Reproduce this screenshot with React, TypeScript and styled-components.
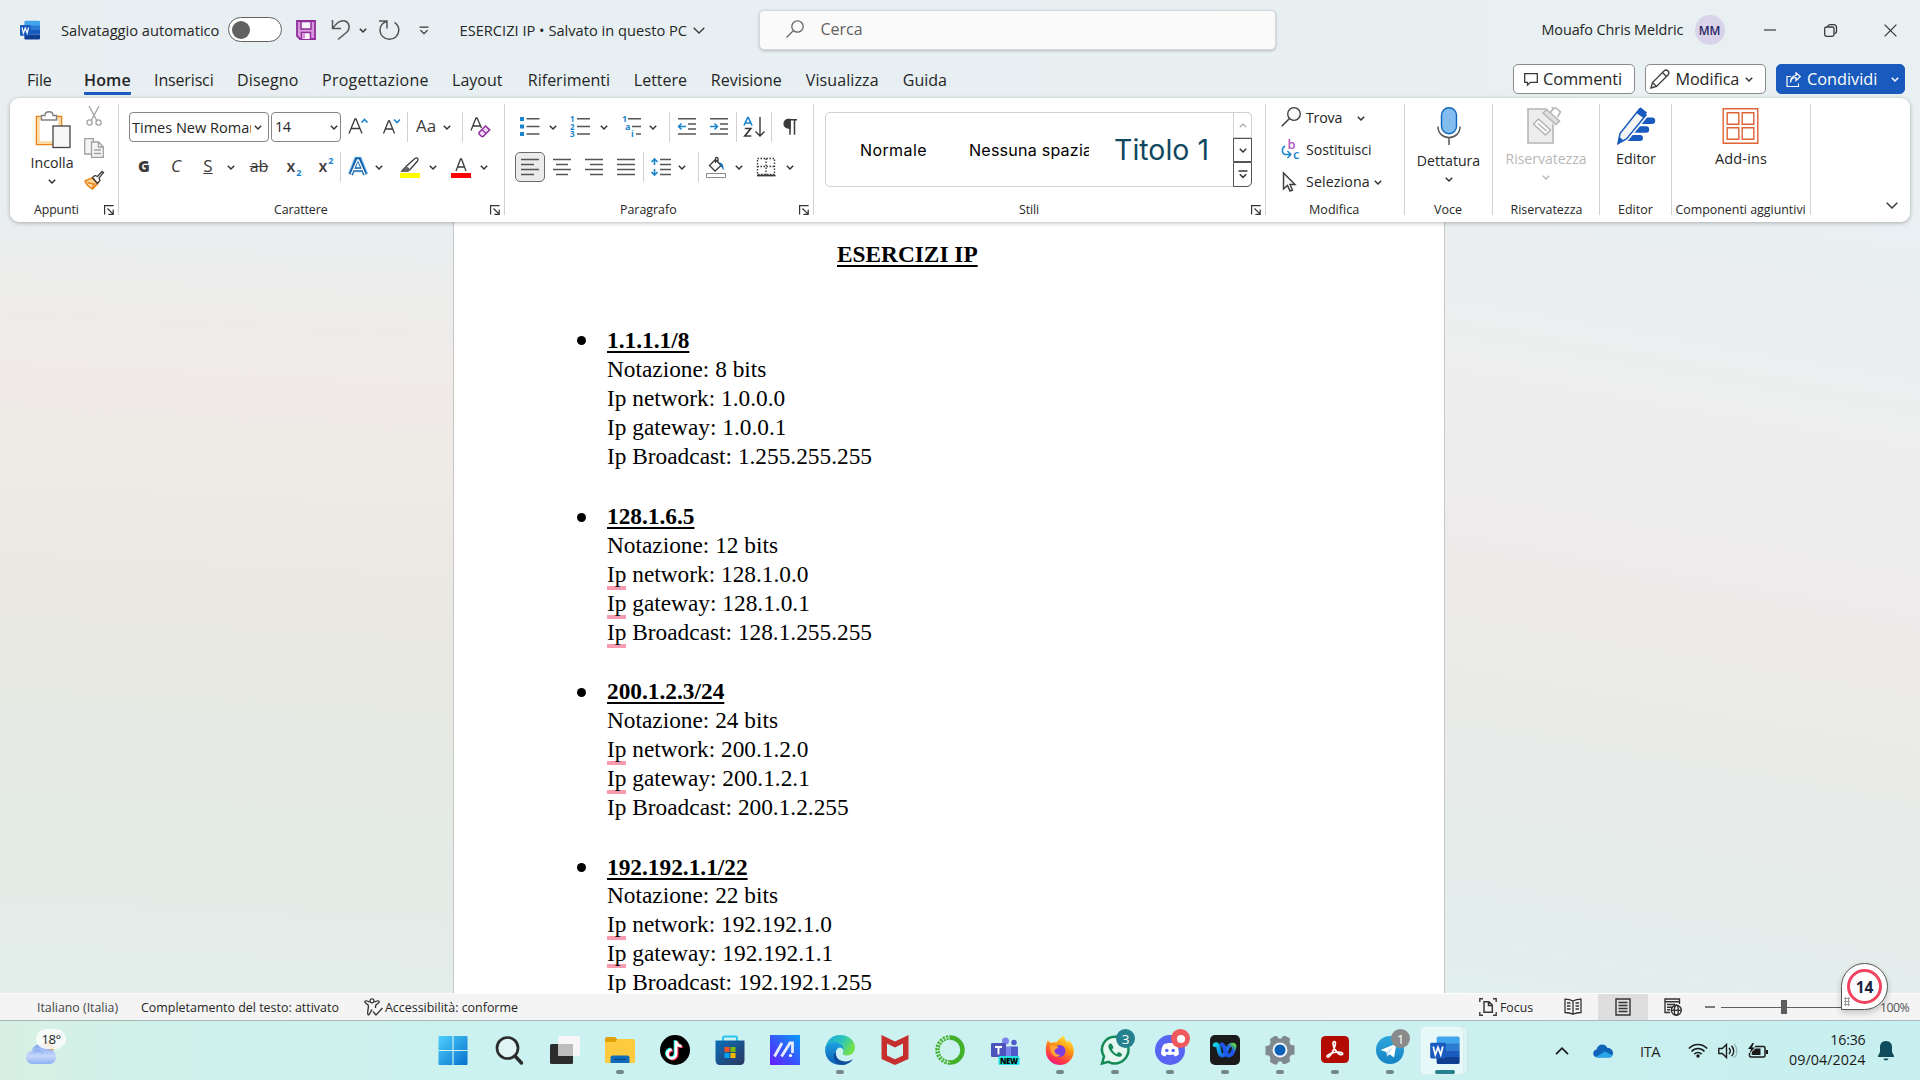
import React from "react";
import styled, { createGlobalStyle } from "styled-components";

const ui = `"Open Sans", "Noto Sans", sans-serif`;

const Global = createGlobalStyle`
  body { margin: 0; overflow: hidden; background: #e8eff2; }
  * { box-sizing: border-box; }
  svg { display: block; flex: none; overflow: visible; }
`;

const Screen = styled.div`
  width: 1920px;
  height: 1080px;
  position: relative;
  overflow: hidden;
  display: flex;
  flex-direction: column;
  background: linear-gradient(90deg, #e9eef1 0, #e7eff2 500px, #e8f0f2 100%);
  font-family: ${ui};
  color: #262626;
`;

const Txt = styled.span<{ $s?: number; $ls?: number; $c?: string; $w?: number; $ml?: number }>`
  font-size: ${(p) => p.$s ?? 14.2}px;
  letter-spacing: ${(p) => p.$ls ?? 0}px;
  color: ${(p) => p.$c ?? "#262626"};
  font-weight: ${(p) => p.$w ?? 400};
  margin-left: ${(p) => p.$ml ?? 0}px;
  line-height: 20px;
  white-space: nowrap;
`;

/* ---------- title bar ---------- */
const TitleBar = styled.header`
  height: 58px;
  flex: none;
  display: flex;
  align-items: center;
  padding-top: 2px;
`;
const Item = styled.div<{ $ml?: number }>`
  margin-left: ${(p) => p.$ml ?? 0}px;
  flex: none;
  display: flex;
  align-items: center;
`;
const Toggle = styled.div`
  width: 54px;
  height: 25px;
  margin-top: -1px;
  border: 1px solid #616161;
  border-radius: 13px;
  background: #fff;
  padding: 3px;
  &::before {
    content: "";
    display: block;
    width: 18px;
    height: 18px;
    border-radius: 50%;
    background: #616161;
  }
`;
const Slot = styled.div<{ $w: number }>`
  width: ${(p) => p.$w}px;
  flex: none;
  display: flex;
  align-items: center;
`;
const Search = styled.div`
  width: 517px;
  height: 40px;
  flex: none;
  display: flex;
  align-items: center;
  padding: 0 0 2px 26px;
  border: 1px solid #d4d8da;
  border-radius: 5px;
  background: #fafafa;
  box-shadow: 0 1px 3px rgba(0, 0, 0, 0.22);
`;
const Avatar = styled.div`
  width: 30px;
  height: 30px;
  border-radius: 50%;
  background: #d8d3e8;
  display: flex;
  align-items: center;
  justify-content: center;
`;

/* ---------- tabs ---------- */
const TabBar = styled.nav`
  height: 40px;
  flex: none;
  display: flex;
  padding: 0 15px 0 27px;
`;
const Tab = styled.div<{ $w: number; $on?: boolean }>`
  width: ${(p) => p.$w}px;
  margin-right: 22.8px;
  height: 37px;
  padding-top: 11px;
  white-space: nowrap;
  border-bottom: 3px solid ${(p) => (p.$on ? "#185abd" : "transparent")};
  border-radius: 1px;
`;
const TabActions = styled.div`
  margin-left: auto;
  padding-top: 6px;
  display: flex;
  gap: 10px;
`;
const ActionButton = styled.div<{ $w: number; $primary?: boolean; $pl: number }>`
  width: ${(p) => p.$w}px;
  height: 30px;
  display: flex;
  align-items: center;
  padding-left: ${(p) => p.$pl}px;
  border-radius: 5px;
  border: 1px solid ${(p) => (p.$primary ? "#185abd" : "#8a8a8a")};
  background: ${(p) => (p.$primary ? "#185abd" : "#fff")};
`;

/* ---------- ribbon ---------- */
const Ribbon = styled.section`
  height: 124px;
  flex: none;
  margin: 0 10px;
  border-radius: 9px;
  background: #fff;
  box-shadow: 0 1px 4px rgba(0, 0, 0, 0.28);
  display: flex;
  position: relative;
  z-index: 2;
`;
const Group = styled.div<{ $w: number }>`
  width: ${(p) => p.$w}px;
  height: 111px;
  margin-top: 6px;
  flex: none;
  border-right: 1px solid #d1d1d1;
  display: flex;
  flex-direction: column;
`;
const GroupBody = styled.div<{ $pt?: number }>`
  height: 95px;
  padding-top: ${(p) => p.$pt ?? 0}px;
  display: flex;
  flex-direction: column;
`;
const GroupFoot = styled.div<{ $pl: number }>`
  height: 16px;
  display: flex;
  align-items: center;
  padding: 6px 4px 0 ${(p) => p.$pl}px;
  & > svg { margin: 0 0 0 auto; }
`;
const Row = styled.div<{ $mt?: number; $h?: number; $pl?: number }>`
  height: ${(p) => p.$h ?? 30}px;
  margin-top: ${(p) => p.$mt ?? 0}px;
  padding-left: ${(p) => p.$pl ?? 0}px;
  flex: none;
  display: flex;
  align-items: center;
`;
const Sep = styled.i<{ $ml: number }>`
  width: 1px;
  height: 30px;
  flex: none;
  margin-left: ${(p) => p.$ml}px;
  background: #d1d1d1;
`;
const Combo = styled.div<{ $w: number; $ml?: number }>`
  width: ${(p) => p.$w}px;
  height: 30px;
  margin-left: ${(p) => p.$ml ?? 0}px;
  border: 1px solid #868686;
  border-radius: 4px;
  display: flex;
  align-items: center;
  justify-content: space-between;
  padding: 0 2px 0 2px;
  background: #fff;
`;
const Clip = styled.div<{ $w: number }>`
  width: ${(p) => p.$w}px;
  overflow: hidden;
  white-space: nowrap;
`;
const Pressed = styled.div`
  width: 30px;
  height: 30px;
  margin-left: 10px;
  flex: none;
  border: 1px solid #6b6b6b;
  border-radius: 5px;
  background: #ebebeb;
  display: flex;
  align-items: center;
  justify-content: center;
`;
const Gallery = styled.div`
  width: 427px;
  height: 75px;
  margin: 8px 0 0 11px;
  display: flex;
  border: 1px solid #d1d1d1;
  border-radius: 5px;
`;
const Styles = styled.div`
  flex: 1;
  display: flex;
  align-items: center;
  font-family: Inter, sans-serif;
  padding-left: 34px;
  span { font-family: Inter, sans-serif; line-height: 36px; }
`;
const Spinner = styled.div`
  width: 19px;
  margin: -1px;
  display: flex;
  flex-direction: column;
`;
const SpinButton = styled.div<{ $h: number; $off?: boolean; $last?: boolean }>`
  height: ${(p) => p.$h}px;
  border: 1px solid ${(p) => (p.$off ? "#d1d1d1" : "#555")};
  border-radius: ${(p) => (p.$off ? "0 5px 0 0" : p.$last ? "0 0 5px 0" : "0")};
  display: flex;
  align-items: center;
  justify-content: center;
`;
const BigButton = styled.div<{ $w: number; $pt: number; $ml?: number }>`
  width: ${(p) => p.$w}px;
  margin-left: ${(p) => p.$ml ?? 0}px;
  padding-top: ${(p) => p.$pt}px;
  display: flex;
  flex-direction: column;
  align-items: center;
`;
const Gap = styled.i<{ $h: number }>`
  height: ${(p) => p.$h}px;
`;
const Side = styled.div`
  display: flex;
  flex-direction: column;
  gap: 12px;
  margin-top: -2px;
  margin-left: 12px;
`;
const Glyph = styled.div<{ $ml: number; $s?: number; $w?: number }>`
  width: 20px;
  height: 20px;
  flex: none;
  margin-left: ${(p) => p.$ml}px;
  font-size: ${(p) => p.$s ?? 18}px;
  font-weight: ${(p) => p.$w ?? 400};
  line-height: 20px;
  display: flex;
  justify-content: center;
  align-items: center;
  padding-bottom: 2px;
  color: #3b3a39;
  sub, sup { font-size: 9px; color: #1a85cd; font-weight: 700; line-height: 9px; }
  sub { margin: 13px 0 0 1px; }
  sup { margin: -11px 0 0 1px; }
`;

/* ---------- document ---------- */
const Workspace = styled.main`
  height: 771px;
  flex: none;
  display: flex;
  overflow: hidden;
`;
const GutterLeft = styled.div`
  width: 453px;
  background: linear-gradient(183deg, #e9eef1 0, #ecedec 8%, #f0ebe9 21%, #eeeae4 34%, #e9e8e2 52%, #e5eae4 72%, #e3ece8 90%, #e3ede9 100%);
`;
const GutterRight = styled.div`
  flex: 1;
  background: linear-gradient(190deg, #e9eff2 0, #eaeef1 12%, #edeeee 24%, #eeecec 42%, #ecebe9 55%, #e9ebe9 68%, #e5ecea 82%, #e1efee 100%);
`;
const Page = styled.article`
  width: 992px;
  flex: none;
  background: #fff;
  border: solid #c6c6c6;
  border-width: 0 1px;
  padding-top: 18px;
  font: 23.333px/29px "Liberation Serif", serif;
  color: #000;
`;
const underline = `
  font-weight: 700;
  text-decoration: underline;
  text-decoration-thickness: 2px;
  text-underline-offset: 3px;
  text-decoration-skip-ink: none;
`;
const DocTitle = styled.h1`
  margin: 0 0 56.6px 383px;
  font-size: inherit;
  ${underline}
`;
const Entry = styled.section<{ $pb: number; $lh: number }>`
  padding: 0 0 ${(p) => p.$pb}px 153px;
  line-height: ${(p) => p.$lh}px;
`;
const EntryHead = styled.div`
  height: 29px;
  display: flex;
  align-items: center;
  margin-left: -30px;
  &::before {
    content: "";
    width: 9px;
    height: 9px;
    border-radius: 50%;
    background: #000;
    margin: 1px 21px 0 0;
  }
  b { ${underline} }
`;
const Line = styled.div`
  white-space: pre;
`;
const Flag = styled.span`
  padding-bottom: 2.5px;
  background: linear-gradient(#f69cae, #f69cae) bottom / 100% 4px no-repeat;
`;

/* ---------- status bar ---------- */
const StatusBar = styled.footer`
  height: 28px;
  flex: none;
  display: flex;
  align-items: center;
  background: #f4f4f4;
  border-top: 1px solid #fff;
  border-bottom: 1px solid #a9b8b9;
  padding-left: 37px;
  & > div > span, & > span { margin-top: 1px; }
`;
const ViewButton = styled.div<{ $on?: boolean }>`
  width: 50px;
  height: 26px;
  display: flex;
  align-items: center;
  justify-content: center;
  background: ${(p) => (p.$on ? "#dedede" : "transparent")};
`;
const Track = styled.div`
  width: 126px;
  height: 14px;
  margin-left: 6px;
  padding-left: 60px;
  background: linear-gradient(#5e5e5e, #5e5e5e) 0 7px / 100% 1px no-repeat;
  &::before { content: ""; display: block; width: 6px; height: 14px; background: #5e5e5e; }
`;

/* ---------- taskbar ---------- */
const TaskBar = styled.div`
  height: 59px;
  flex: none;
  display: flex;
  align-items: center;
  background: linear-gradient(90deg, #d8f0e3 0, #d0f1ea 150px, #cbf2f0 480px, #cbf1f0 1300px, #c8efef 100%);
`;
const Weather = styled.div`
  width: 425px;
  height: 59px;
  flex: none;
  padding: 8px 0 0 26px;
  display: flex;
`;
const WeatherIcon = styled.div`
  position: relative;
  width: 44px;
  height: 36px;
`;
const Temp = styled.div`
  position: absolute;
  left: 10px;
  top: 0;
  width: 30px;
  height: 20px;
  border-radius: 10px;
  background: rgba(250, 252, 252, 0.88);
  display: flex;
  align-items: center;
  justify-content: center;
`;
const AppSlot = styled.div<{ $mr?: number }>`
  width: 55px;
  height: 59px;
  flex: none;
  margin-right: ${(p) => p.$mr ?? 0}px;
  display: flex;
  flex-direction: column;
  align-items: center;
  padding-top: 14px;
  position: relative;
`;
const Run = styled.i<{ $on?: boolean }>`
  width: ${(p) => (p.$on ? 20 : 8)}px;
  height: 4px;
  margin-top: 5px;
  border-radius: 2px;
  background: ${(p) => (p.$on ? "#25808f" : "#738887")};
`;
const Badge = styled.div<{ $bg: string }>`
  position: absolute;
  left: 29px;
  top: 8px;
  width: 19px;
  height: 19px;
  border-radius: 50%;
  background: ${(p) => p.$bg};
  display: flex;
  align-items: center;
  justify-content: center;
`;
const Dot = styled.i`
  width: 8px;
  height: 8px;
  border-radius: 50%;
  background: #fff;
`;
const ActiveTile = styled.div`
  position: absolute;
  left: 3px;
  top: 5px;
  width: 44px;
  height: 49px;
  border-radius: 5px;
  background: #e6f8f8;
  border: 1px solid #d8eeee;
  box-shadow: 4px 0 0 -1px #dcf5f5, 4px 0 0 0 #c3e3e4;
`;
const Above = styled.div`
  position: relative;
  display: flex;
  flex-direction: column;
  align-items: center;
`;
const Clock = styled.div`
  width: 91px;
  height: 42px;
  margin-left: 7px;
  display: flex;
  flex-direction: column;
  align-items: flex-end;
`;
const Bubble = styled.div`
  position: absolute;
  z-index: 4;
  left: 1841px;
  top: 963px;
  width: 47px;
  height: 47px;
  border: 1px solid #555;
  border-radius: 50% 50% 50% 0;
  background: #fff;
  box-shadow: 0 3px 6px rgba(0, 0, 0, 0.2);
  padding: 5px;
`;
const Ring = styled.div`
  width: 35px;
  height: 35px;
  border: 3px solid #f0435f;
  border-radius: 50%;
  display: flex;
  align-items: center;
  justify-content: center;
  background: #fff;
  position: relative;
`;
const Grip = styled.i`
  position: absolute;
  left: 2px;
  bottom: 3px;
  width: 6px;
  height: 9px;
  background: radial-gradient(circle, #999 1px, transparent 1.2px) 0 0 / 3px 3px;
`;

/* ---------- drawings ---------- */
type P = { children: React.ReactNode; w?: number; h?: number; ml?: number; vb?: string };
const IconBox = styled.div<{ $ml: number }>`
  margin-left: ${(p) => p.$ml}px;
  flex: none;
`;
const Ic = ({ children, w = 20, h = 20, ml = 0, vb }: P) => (
  <IconBox $ml={ml}>
    <svg width={w} height={h} viewBox={vb ?? `0 0 ${w} ${h}`} fill="none" stroke="#3b3a39" strokeWidth="1.3">
      {children}
    </svg>
  </IconBox>
);
const Chev = ({ ml = 0, c = "#333", up = false }: { ml?: number; c?: string; up?: boolean }) => (
  <Ic w={8} h={5} ml={ml}>
    <path d={up ? "M.8 4.2 4 1l3.2 3.2" : "M.8.8 4 4 7.2.8"} stroke={c} strokeWidth="1.5" />
  </Ic>
);
const Launcher = () => (
  <svg width="10" height="10" viewBox="0 0 10 10" fill="none" stroke="#333" strokeWidth="1.2">
    <path d="M.6 9.5V.6h9M3.500 3.500l5.200 5.200M9.200 4.500v4.900H4.400" />
  </svg>
);
const WordShape = () => (
  <>
    <path d="M9 1h21a2 2 0 0 1 2 2v6H7V3a2 2 0 0 1 2-2z" fill="#41a5ee" />
    <path d="M7 8.500h25v7.500H7z" fill="#2b7cd3" />
    <path d="M7 16h25v7.500H7z" fill="#185abd" />
    <path d="M7 23.500h25V29a2 2 0 0 1-2 2H9a2 2 0 0 1-2-2z" fill="#103f91" />
    <rect x="0" y="8" width="17" height="17" rx="1.500" fill="#185abd" />
    <path d="m3.300 12 2.200 9 3-8.200 3 8.200 2.200-9" fill="none" stroke="#fff" strokeWidth="1.900" />
  </>
);

const TABS: [string, number, number, number?][] = [
  ["File", 34.3, -0.2], ["Home", 47.2, 0.1, 600], ["Inserisci", 60.2, -0.15], ["Disegno", 62.2, 0.17],
  ["Progettazione", 107.2, 0.22], ["Layout", 53, 0.02], ["Riferimenti", 83.2, 0], ["Lettere", 54.2, 0],
  ["Revisione", 72.2, 0], ["Visualizza", 74.2, 0.1], ["Guida", 44, 0],
];

const ENTRIES = [
  { head: "1.1.1.1/8", bits: "8", net: "1.0.0.0", gw: "1.0.0.1", bc: "1.255.255.255", flags: 0, pb: 31.5, lh: 29 },
  { head: "128.1.6.5", bits: "12", net: "128.1.0.0", gw: "128.1.0.1", bc: "128.1.255.255", flags: 3, pb: 30, lh: 29 },
  { head: "200.1.2.3/24", bits: "24", net: "200.1.2.0", gw: "200.1.2.1", bc: "200.1.2.255", flags: 2, pb: 30.3, lh: 29 },
  { head: "192.192.1.1/22", bits: "22", net: "192.192.1.0", gw: "192.192.1.1", bc: "192.192.1.255", flags: 2, pb: 30, lh: 28.7 },
];
const IpWord = ({ on }: { on: boolean }) => (on ? <Flag>Ip</Flag> : <>Ip</>);

const hlines = (rows: [number, number][], ys: number[]) => rows.map(([a, b], i) => `M${a} ${ys[i]}H${b}`).join("");

type TaskProps = { children: React.ReactNode; run?: boolean; on?: boolean; mr?: number; badge?: React.ReactNode };
const TaskApp = ({ children, run, on, mr, badge }: TaskProps) => (
  <AppSlot $mr={mr}>
    {on && <ActiveTile />}
    <Above>
      <svg width="30" height="30" viewBox="0 0 30 30">{children}</svg>
      {(run || on) && <Run $on={on} />}
    </Above>
    {badge}
  </AppSlot>
);

export default function App() {
  return (
    <Screen>
      <Global />
      <TitleBar>
        <Slot $w={61}><Item $ml={20}><svg width="20" height="20" viewBox="0 0 32 32"><WordShape /></svg></Item></Slot>
        <Slot $w={167}><Txt $s={14.65}>Salvataggio automatico</Txt></Slot>
        <Slot $w={68}><Toggle /></Slot>
        <Ic w={20} h={20}>
          <path d="M1 1h18v18H4l-3-3z" fill="#d896dc" stroke="#8f2e9b" strokeWidth="1.800" />
          <path d="M5 1.500h10V9H5zM5.500 19v-6.500h9V19" fill="#faf3fb" stroke="#8f2e9b" strokeWidth="1.500" />
          <path d="M6 13h3v5.500H6z" fill="#d896dc" stroke="none" />
        </Ic>
        <Ic ml={15} w={20} h={20}><path d="M1.500 0v8.500H10M1.700 8.300C5 3.500 9.500-.5 14 1c4.500 1.500 5.500 7 2 11L7 19.500" strokeWidth="1.500" stroke="#555" /></Ic>
        <Chev ml={7.500} />
        <Ic ml={12} w={20} h={20}><path d="M0 1h8v7.500M7.500 1.500C3 3 1 6.500 1 10.500c0 5 4.500 8.800 9.500 8.800s9.300-4 9.300-9c0-3.500-2-6.500-4.300-8" strokeWidth="1.500" stroke="#555" /></Ic>
        <Ic ml={20} w={10} h={9}><path d="M.5 1.200h9M1.500 4.200 5 7.700l3.500-3.500" strokeWidth="1.300" /></Ic>
        <Slot $w={232}><Txt $s={14.65} $ml={31} $ls={0}>ESERCIZI IP • Salvato in questo PC</Txt></Slot>
        <Item $ml={32}><Ic w={12} h={7}><path d="M.7.7 6 6 11.300.7" strokeWidth="1.300" /></Ic></Item>
        <Item $ml={54}>
          <Search>
            <Ic w={18} h={18} ml={0}><circle cx="11.500" cy="6.500" r="5.700" stroke="#666" /><path d="M7.500 10.500.5 17.500" stroke="#666" /></Ic>
            <Txt $s={16} $c="#616161" $ml={17} $ls={-0.03}>Cerca</Txt>
          </Search>
        </Item>
        <Item $ml={266}><Slot $w={153}><Txt $s={14.4} $ls={-0.08}>Mouafo Chris Meldric</Txt></Slot><Avatar><Txt $s={11.8} $w={600} $c="#2b1f63">MM</Txt></Avatar></Item>
        <Ic ml={39} w={12} h={2}><path d="M0 1h12" strokeWidth="1.200" /></Ic>
        <Ic ml={48} w={13} h={13}><rect x=".7" y="3" width="9.300" height="9.300" rx="1.800" /><path d="M3.500 2.800C3.800 1.500 4.500.7 6 .7h3.500c2 0 3 1 3 3V7c0 1.500-.8 2.500-2 2.700" /></Ic>
        <Ic ml={47} w={13} h={13}><path d="m.6.6 11.800 11.800M12.400.6.6 12.400" /></Ic>
      </TitleBar>

      <TabBar>
        {TABS.map(([t, w, ls, wt]) => (
          <Tab key={t} $w={w} $on={t === "Home"}><Txt $s={16} $ls={ls} $w={wt}>{t}</Txt></Tab>
        ))}
        <TabActions>
          <ActionButton $w={122} $pl={10}>
            <Ic w={14} h={14}><path d="M.7 1.700h12.600v8.600H6.500L3.500 13V10.300H.7z" /></Ic>
            <Txt $s={16.4} $ls={-0.1} $ml={5}>Commenti</Txt>
          </ActionButton>
          <ActionButton $w={121} $pl={4}>
            <Ic w={20} h={20}><path d="m1 19 1.500-5.500L14 2c3-2.500 6.500 1 4 4L6.500 17.500zM2.500 13.500l4 4M12.500 3.500l4 4" /></Ic>
            <Txt $s={16.2} $ls={-0.1} $ml={5.5}>Modifica</Txt>
            <Chev ml={6} />
          </ActionButton>
          <ActionButton $w={129} $primary $pl={9}>
            <Ic w={15} h={15}><path d="M5 4.500H1v10h11.500v-3M4.500 10.500C5 7 7 5.500 10 5.500V8.500l4.300-4L10 .8v2.700C6.500 4 4.500 6.500 4.500 10.500z" stroke="#fff" strokeWidth="1.200" /></Ic>
            <Txt $s={16.3} $c="#fff" $ml={6}>Condividi</Txt>
            <Chev ml={13.500} c="#fff" />
          </ActionButton>
        </TabActions>
      </TabBar>

      <Ribbon>
        <Group $w={109}>
          <GroupBody>
            <Row $h={90} $pl={18}>
              <BigButton $w={48} $pt={0}>
                <svg width="36" height="40" viewBox="0 0 36 40" fill="none">
                  <path d="M2.500 7.500h25v28h-25z" fill="#fff" stroke="#e8831d" strokeWidth="1.600" />
                  <path d="M4.500 9.500h21v24h-21z" stroke="#fbd9a0" strokeWidth="2.400" />
                  <path d="M7.500 11V6.500H11c0-5 8-5 8 0h3.500V11z" fill="#fff" stroke="#808080" strokeWidth="1.400" />
                  <rect x="19" y="17" width="17" height="21.500" fill="#f6f6f6" stroke="#444" strokeWidth="1.300" />
                </svg>
                <Gap $h={4} />
                <Txt $s={14.2}>Incolla</Txt>
                <Gap $h={6} />
                <Chev />
                <Gap $h={6} />
              </BigButton>
              <Side>
                <Ic w={20} h={20} ml={-4}><path d="m5 0 7.500 14M15 0 7.500 14" stroke="#a0a0a0" /><circle cx="5.500" cy="16.500" r="2.600" stroke="#a0a0a0" /><circle cx="14.500" cy="16.500" r="2.600" stroke="#a0a0a0" /></Ic>
                <Ic w={20} h={20} ml={-4}><path d="M.7.7h8.600V16H.7z" fill="#f4f4f4" stroke="#a0a0a0" /><path d="M7.500 4h7l4.800 4.800v10.500H7.500zM14.500 4v5h5M10 12h7M10 15.500h7" fill="#f4f4f4" stroke="#a0a0a0" /></Ic>
                <Ic w={20} h={20} ml={-4}><path d="m1 11 7-3 5.500 6-5 5c-2-1-6-4-7.500-8z" fill="#fbd9a0" stroke="#e8831d" strokeWidth="1.500" /><path d="m3.500 12.500 8 2M8.500 18l1.500-4" stroke="#e8831d" /><path d="m8.500 7.500 2.500-2 2.500 1L18 1.500l1.500 1.200L15 8l1 2.500-2.500 3z" fill="#fff" /></Ic>
              </Side>
            </Row>
          </GroupBody>
          <GroupFoot $pl={24}><Txt $s={12.35} $ls={-0.1}>Appunti</Txt><Launcher /></GroupFoot>
        </Group>

        <Group $w={386}>
          <GroupBody $pt={8}>
            <Row $pl={10}>
              <Combo $w={140}><Clip $w={119}><Txt $s={14.55} $ls={-0.02}>Times New Roman</Txt></Clip><Chev ml={-1} /><i /></Combo>
              <Combo $w={70} $ml={2}><Txt $s={14.4} $ls={-0.4} $ml={1}>14</Txt><Chev ml={36} /></Combo>
              <Ic ml={7}><path d="M1 16.500 7 2h1l6 14.500M3 11.500h9" /><path d="M13.500 5.500 16.500 2.500l3 3" stroke="#1a85cd" strokeWidth="1.600" /></Ic>
              <Ic ml={13}><path d="M2.500 16.500 7.500 4h1l5 12.500M4.500 12h7.500" /><path d="m13 2.500 3 3 3-3" stroke="#1a85cd" strokeWidth="1.600" /></Ic>
              <Sep $ml={6} />
              <Glyph $ml={8} $s={17}>Aa</Glyph>
              <Chev ml={7} />
              <Sep $ml={11} />
              <Ic ml={7}><path d="M1 13.500 6 1h1l4.500 10M3 9h7.500" /><path d="m9 15.500 6.500-6.500 4.200 3.800-6.500 6.700h-1.500L9 17z" fill="#f3dff5" stroke="#9332a0" strokeWidth="1.600" /><path d="m12 12.500 4 4" stroke="#9332a0" /></Ic>
            </Row>
            <Row $mt={10}>
              <Glyph $ml={15} $s={16} $w={800}>G</Glyph>
              <Glyph $ml={12} $s={17}><em>C</em></Glyph>
              <Glyph $ml={12} $s={17}><u>S</u></Glyph>
              <Chev ml={9} />
              <Glyph $ml={14} $s={16}><s>ab</s></Glyph>
              <Glyph $ml={15} $s={16} $w={600}>x<sub>2</sub></Glyph>
              <Glyph $ml={12} $s={16} $w={600}>x<sup>2</sup></Glyph>
              <Sep $ml={4} />
              <Ic ml={7}><path d="M2.500 17.500 8.500 2.500h3l6 15M6 12.500h8" stroke="#7fbdf0" strokeWidth="5.500" /><path d="M2.800 17.500 8.800 2.500h2.400l6 15M6 12.500h8" stroke="#0f5ea8" strokeWidth="3.800" /><path d="M3 17.500 9.500 3h1L17 17.500M6 12.500h8" stroke="#fff" strokeWidth="1.300" /></Ic>
              <Chev ml={7} />
              <Ic ml={17}><path d="M0 16h20v5H0z" fill="#ff0" stroke="none" /><path d="M2 14 6.500 9 15 1.500c2-1.500 4 .5 2.500 2.500L10.500 12l-2.500 2z" fill="#fff" /><path d="M2 14.500 6.500 9l4 3.500-2.500 2z" fill="#666" stroke="none" /></Ic>
              <Chev ml={9} />
              <Ic ml={14}><path d="M0 16h20v5H0z" fill="#f00" stroke="none" /><path d="M5 14 9.500 2h1L15 14M6.500 10h7" /></Ic>
              <Chev ml={9} />
            </Row>
          </GroupBody>
          <GroupFoot $pl={155}><Txt $s={12.35} $ls={-0.08}>Carattere</Txt><Launcher /></GroupFoot>
        </Group>

        <Group $w={309}>
          <GroupBody $pt={8}>
            <Row>
              <Ic ml={15}><path d="M0 0h4v4H0zM0 7.500h4v4H0zM0 15h4v4H0z" fill="#1a85cd" stroke="none" /><path d={hlines([[6.5, 19.5], [6.5, 19.5], [6.5, 19.5]], [1.8, 9.5, 17])} strokeWidth="1.500" stroke="#555" /></Ic>
              <Chev ml={9} />
              <Ic ml={13}>
                <path d={hlines([[7, 20], [7, 20], [7, 20]], [1.8, 9.5, 17])} strokeWidth="1.500" stroke="#555" />
                <g fill="#1a85cd" stroke="none" fontSize="8" fontWeight="700" fontFamily="Open Sans"><text x="0" y="4.500">1</text><text x="0" y="12.500">2</text><text x="0" y="20">3</text></g>
              </Ic>
              <Chev ml={10} />
              <Ic ml={14}>
                <path d={hlines([[6, 19], [10, 19], [14, 19]], [1.8, 9.5, 17])} strokeWidth="1.500" stroke="#555" />
                <g fill="#1a85cd" stroke="none" fontSize="9" fontWeight="700" fontFamily="Open Sans"><text x="0" y="4.500">1</text><text x="3" y="12.500">a</text><text x="9" y="20">i</text></g>
              </Ic>
              <Chev ml={7} />
              <Sep $ml={12} />
              <Ic ml={7}><path d="M1 1.800h18M11 7h8M11 12h8M1 17h18" stroke="#555" strokeWidth="1.500" /><path d="M9 9.500H1.500M4.500 6.500l-3 3 3 3" stroke="#1a85cd" strokeWidth="1.500" /></Ic>
              <Ic ml={12}><path d="M1 1.800h18M11 7h8M11 12h8M1 17h18" stroke="#555" strokeWidth="1.500" /><path d="M1 9.500h7.500M5.500 6.500l3 3-3 3" stroke="#1a85cd" strokeWidth="1.500" /></Ic>
              <Sep $ml={7} />
              <Ic ml={7}><path d="M0 8.500 3.700.5h.6L8 8.500M1.500 6h5" stroke="#1a85cd" strokeWidth="1.700" /><path d="M.8 11.500h6l-6 7.500h6.500" strokeWidth="1.700" /><path d="M16 0v18.500M11.500 14.500l4.500 4.500 4.500-4.500" strokeWidth="1.400" /></Ic>
              <Sep $ml={7} />
              <Ic ml={7}><path d="M8 2.700h10M11 2.700v15M15.500 2.700v15" strokeWidth="1.500" /><path d="M11 11H9.300a4.200 4.200 0 0 1 0-8.500H11z" fill="#3b3a39" /></Ic>
            </Row>
            <Row $mt={10}>
              <Pressed><Ic><path d={hlines([[1, 19], [1, 14], [1, 19], [1, 14]], [2.5, 7.5, 12.5, 17.5])} stroke="#555" strokeWidth="1.500" /></Ic></Pressed>
              <Ic ml={7}><path d={hlines([[1, 19], [4, 16], [1, 19], [4, 16]], [2.5, 7.5, 12.5, 17.5])} stroke="#555" strokeWidth="1.500" /></Ic>
              <Ic ml={12}><path d={hlines([[1, 19], [6, 19], [1, 19], [6, 19]], [2.5, 7.5, 12.5, 17.5])} stroke="#555" strokeWidth="1.500" /></Ic>
              <Ic ml={12}><path d={hlines([[1, 19], [1, 19], [1, 19], [1, 19]], [2.5, 7.5, 12.5, 17.5])} stroke="#555" strokeWidth="1.500" /></Ic>
              <Sep $ml={7} />
              <Ic ml={7}><path d={hlines([[9, 20], [9, 20], [9, 20], [9, 20]], [2.5, 7.5, 12.5, 17.5])} stroke="#555" strokeWidth="1.500" /><path d="M3.500 8V2M.5 5l3-3.200 3 3.200M3.500 12v6M.5 15l3 3.200 3-3.200" stroke="#1a85cd" strokeWidth="1.600" /></Ic>
              <Chev ml={7} />
              <Sep $ml={12} />
              <Ic ml={7}><path d="M.5 16.500h19v4H.5z" fill="#fff" stroke="#8a8a8a" strokeWidth="1" /><path d="m3.500 8.500 6-6 5.500 6-6 5.500zM9.500 6V1.500c0-1.500 2.500-1.500 2.500 0v3" /><path d="M13 5.500c3 0 5 2.500 4.500 8l-3-5z" fill="#1a6fb5" stroke="none" /></Ic>
              <Chev ml={9} />
              <Ic ml={13}><path d="M1.500 1.500h17v16h-17zM10 1.500v16M1.500 9.500h17" strokeDasharray="1.500 1.500" strokeWidth="1.400" /><path d="M1 18.500h18.500" strokeWidth="1.800" /></Ic>
              <Chev ml={10} />
            </Row>
          </GroupBody>
          <GroupFoot $pl={115}><Txt $s={12.4}>Paragrafo</Txt><Launcher /></GroupFoot>
        </Group>

        <Group $w={452}>
          <GroupBody>
            <Gallery>
              <Styles>
                <Slot $w={109}><Txt $s={16} $ls={0.4} $c="#000">Normale</Txt></Slot>
                <Slot $w={145}><Clip $w={120}><Txt $s={16.1} $ls={0.2} $c="#000">Nessuna spaziatura</Txt></Clip></Slot>
                <Txt $s={28.4} $ls={0.05} $c="#0f4761">Titolo 1</Txt>
              </Styles>
              <Spinner>
                <SpinButton $h={26} $off><Chev up c="#b0b0b0" /></SpinButton>
                <SpinButton $h={24}><Chev /></SpinButton>
                <SpinButton $h={25} $last><Ic w={10} h={9}><path d="M.5 1h9M1.800 4.200 5 7.400l3.200-3.200" strokeWidth="1.500" /></Ic></SpinButton>
              </Spinner>
            </Gallery>
          </GroupBody>
          <GroupFoot $pl={205}><Txt $s={12.4} $ls={-0.1}>Stili</Txt><Launcher /></GroupFoot>
        </Group>

        <Group $w={139}>
          <GroupBody $pt={3}>
            <Row $h={22} $pl={15}>
              <Ic><circle cx="13" cy="6" r="6.300" fill="#fafafa" /><path d="M8.500 10.500.7 18.300" strokeWidth="1.500" /></Ic>
              <Txt $s={14.2} $ml={5} $ls={-0.2}>Trova</Txt><Chev ml={15} />
            </Row>
            <Row $h={22} $mt={10} $pl={15}>
              <Ic>
                <g stroke="none" fontFamily="Open Sans" fontWeight="600"><text x="6.500" y="9" fontSize="13" fill="#b657c4">b</text><text x="12" y="19" fontSize="13" fill="#1a85cd">c</text></g>
                <path d="M4 6C.5 8 .5 13 4 14.500h5M6.500 11l3.300 3.500L6.500 18" stroke="#1a85cd" strokeWidth="1.500" />
              </Ic>
              <Txt $s={14.2} $ml={5} $ls={-0.06}>Sostituisci</Txt>
            </Row>
            <Row $h={22} $mt={10} $pl={15}>
              <Ic><path d="M2.500 1v16l4-3.500 2.500 5.500 2.500-1-2.500-5.500h5z" fill="#f6f6f6" strokeWidth="1.400" /></Ic>
              <Txt $s={14.2} $ml={5} $ls={0.13}>Seleziona</Txt><Chev ml={4} />
            </Row>
          </GroupBody>
          <GroupFoot $pl={43}><Txt $s={12.6}>Modifica</Txt></GroupFoot>
        </Group>

        <Group $w={88}>
          <GroupBody>
            <BigButton $w={87} $pt={3}>
              <svg width="24" height="38" viewBox="0 0 24 38" fill="none">
                <rect x="4.500" y=".7" width="15" height="26" rx="7.500" fill="#83bdf0" stroke="#0f67b8" strokeWidth="1.400" />
                <path d="M1 19.500c0 7 5 11 11 11s11-4 11-11M12 30.500V38" stroke="#555" strokeWidth="1.500" />
              </svg>
              <Gap $h={6} />
              <Txt $s={14.1}>Dettatura</Txt>
              <Gap $h={6} />
              <Chev />
            </BigButton>
          </GroupBody>
          <GroupFoot $pl={29}><Txt $s={12.5}>Voce</Txt></GroupFoot>
        </Group>

        <Group $w={107}>
          <GroupBody>
            <BigButton $w={106} $pt={3}>
              <svg width="34" height="38" viewBox="0 0 34 38" fill="none" stroke="#b5b5b5" strokeWidth="1.600">
                <path d="M-1 2h25v34H-1z" fill="#ededed" />
                <path d="m14 4 8-5 10 13-4 10z" fill="#fff" stroke="none" />
                <path d="m4.500 17 5-5 12 11-5 5zM9 16.500l8.500 7.500" fill="#fff" />
                <path d="m14 6 3.500-3.500L30.500 14 27 17.500z" fill="#e0e0e0" />
                <path d="m21.500 5.500 2.500-3.500-1-2M27 1l4.500 4-3 5M24 2l3-1.500" />
              </svg>
              <Gap $h={4} />
              <Txt $s={14} $c="#b8b8b8">Riservatezza</Txt>
              <Gap $h={6} />
              <Chev c="#b8b8b8" />
            </BigButton>
          </GroupBody>
          <GroupFoot $pl={17.5}><Txt $s={12.45}>Riservatezza</Txt></GroupFoot>
        </Group>

        <Group $w={72}>
          <GroupBody>
            <BigButton $w={72} $pt={3}>
              <svg width="38" height="38" viewBox="0 0 38 38">
                <path d="M18 10.500h17a3.200 3.200 0 0 1 0 6.400H18zM14 19.300h15a3.200 3.200 0 0 1 0 6.400H12zM10 28h13a3 3 0 0 1 0 6H8z" fill="#185abd" />
                <path d="M23 1 1.800 26.500.5 37 10 32.500 30 8z" fill="#fff" stroke="#fff" strokeWidth="3" />
                <path d="M22.500 2 3 26.500 1 36.500 9.500 32 29 8z" fill="#f5f5f5" stroke="#185abd" strokeWidth="1.500" />
                <path d="M23.500.3 30 5.500 26.500 11 19.500 6zM2.200 29.500 6.500 33.500.3 37.700z" fill="#185abd" />
              </svg>
              <Gap $h={4} />
              <Txt $s={14.3}>Editor</Txt>
            </BigButton>
          </GroupBody>
          <GroupFoot $pl={18}><Txt $s={12.5}>Editor</Txt></GroupFoot>
        </Group>

        <Group $w={139}>
          <GroupBody>
            <BigButton $w={138} $pt={3}>
              <svg width="38" height="38" viewBox="0 0 38 38" fill="#fff" stroke="#e06236" strokeWidth="1.400">
                <path d="M1.200 1.700h34.600v34.600H1.200z" />
                <path d="M5.200 5.700h11.600v11.600H5.200zM20.200 5.700h11.600v11.600H20.200zM5.200 20.700h11.600v11.600H5.200zM20.200 20.700h11.600v11.600H20.200z" />
              </svg>
              <Gap $h={4} />
              <Txt $s={14.5} $ls={0.15}>Add-ins</Txt>
            </BigButton>
          </GroupBody>
          <GroupFoot $pl={3.5}><Txt $s={12.4}>Componenti aggiuntivi</Txt></GroupFoot>
        </Group>
        <Row $h={14} $mt={100} $pl={75}><Ic w={12} h={7}><path d="M.7.7 6 6 11.300.7" strokeWidth="1.500" /></Ic></Row>
      </Ribbon>

      <Workspace>
        <GutterLeft />
        <Page>
          <DocTitle>ESERCIZI IP</DocTitle>
          {ENTRIES.map((e) => (
            <Entry key={e.head} $pb={e.pb} $lh={e.lh}>
              <EntryHead><b>{e.head}</b></EntryHead>
              <Line>Notazione: {e.bits} bits</Line>
              <Line><IpWord on={e.flags > 0} /> network: {e.net}</Line>
              <Line><IpWord on={e.flags > 1} /> gateway: {e.gw}</Line>
              <Line><IpWord on={e.flags > 2} /> Broadcast: {e.bc}</Line>
            </Entry>
          ))}
        </Page>
        <GutterRight />
      </Workspace>

      <StatusBar>
        <Slot $w={104}><Txt $s={12.35} $c="#444">Italiano (Italia)</Txt></Slot>
        <Slot $w={223}><Txt $s={12.45}>Completamento del testo: attivato</Txt></Slot>
        <Ic w={19} h={18}><circle cx="8" cy="2.800" r="2" /><path d="M5.500 4C3.500 3 1 2 .8 4c0 1.500 3.700 2 3.700 4S3 15 4 16.500c1.500 1.500 2.500-3 4-5M10.500 4c2-1 4.500-2 4.700 0 0 1.500-3.700 2-3.700 4v2M9 13.500l3 3.500 6.500-7" strokeWidth="1.400" /></Ic>
        <Slot $w={1096}><Txt $s={12.45} $ml={2}>Accessibilità: conforme</Txt></Slot>
        <Ic w={18} h={18}><path d="M4 .8H.8V4M14 .8h3.200V4M4 17.200H.8V14M14 17.200h3.200V14" strokeWidth="1.400" /><path d="M5 3.700h5l3.300 3.300v7.300H5zM9.500 3.700V7.500h3.800" strokeWidth="1.500" /></Ic>
        <Slot $w={51}><Txt $s={12.3} $ml={3}>Focus</Txt></Slot>
        <ViewButton>
          <svg width="18" height="18" viewBox="0 0 18 18" fill="none" stroke="#333" strokeWidth="1.300"><path d="M9 3C6.500 1.500 4 1.200 1 1.200v13.300c3 0 5.500.3 8 1.800 2.500-1.500 5-1.800 8-1.800V1.200c-3 0-5.500.3-8 1.800zM9 3v13.300M3 5h3.500M3 8h3.500M3 11h3.500M11.500 5H15M11.500 8H15M11.500 11H15" /></svg>
        </ViewButton>
        <ViewButton $on>
          <svg width="16" height="18" viewBox="0 0 16 18" fill="none" stroke="#333" strokeWidth="1.400"><path d="M1 1h14v16H1zM3.500 4.500h9M3.500 7.500h9M3.500 10.500h9M3.500 13.500h9" /></svg>
        </ViewButton>
        <ViewButton>
          <svg width="18" height="18" viewBox="0 0 18 18" fill="none" stroke="#333" strokeWidth="1.400"><path d="M6 14.500H1V1h14.500v5M1 3.700h14.500M3 6.500h8M3 9.200h5M3 11.800h3" /><circle cx="12.300" cy="12.300" r="5" /><ellipse cx="12.300" cy="12.300" rx="2" ry="5" /><path d="M7.500 12.300h9.500" /></svg>
        </ViewButton>
        <Ic w={10} h={2} ml={7}><path d="M0 1h10" /></Ic>
        <Track />
        <Txt $s={12.3} $c="#555" $ls={-0.5} $ml={33}>100%</Txt>
      </StatusBar>

      <TaskBar>
        <Weather>
          <WeatherIcon>
            <svg width="30" height="36" viewBox="0 0 30 36">
              <defs><linearGradient id="cl" x1="0" y1="0" x2="0" y2="1"><stop offset="0" stopColor="#7fa3ee" /><stop offset=".6" stopColor="#c5d7fa" /><stop offset="1" stopColor="#8fb0f3" /></linearGradient></defs>
              <circle cx="22" cy="18" r="6" fill="#f08a2c" />
              <path d="M7 35a6.500 6.500 0 0 1-1-13c1-8 13-9 15-2 5-.5 9 3 9 8 0 4-3 7-6 7z" fill="url(#cl)" />
              <path d="M8 24c2-3 7-3 9 1" fill="none" stroke="#7b9fe8" strokeWidth=".8" />
            </svg>
            <Temp><Txt $s={13.2} $ls={-0.6}>18°</Txt></Temp>
          </WeatherIcon>
        </Weather>

        <TaskApp mr={2}>
          <defs><linearGradient id="wn" x1="0" y1="0" x2="1" y2="1"><stop offset="0" stopColor="#4fd0fb" /><stop offset="1" stopColor="#0570cf" /></linearGradient></defs>
          <rect x=".5" y="1" width="29" height="29" rx="1" fill="url(#wn)" /><path d="M15 1v29M.500 15.500h29" stroke="#cbf2f0" strokeWidth="1.200" />
        </TaskApp>
        <TaskApp><circle cx="12.500" cy="13" r="10.500" fill="#e1f4f4" stroke="#2b2b2b" strokeWidth="2.700" /><path d="m20 21 6.500 7" stroke="#2b2b2b" strokeWidth="3.500" strokeLinecap="round" /></TaskApp>
        <TaskApp>
          <rect x="0" y="9" width="23" height="20" rx="1.500" fill="#2c2c2c" /><rect x="8" y="1" width="22" height="20" rx="1.500" fill="#f6f6f6" /><path d="M8 9h15v12H9.500L8 20z" fill="#bdbdbd" />
        </TaskApp>
        <TaskApp run>
          <path d="M0 4c0-1 .5-2 2-2h8l3 3-3 4H0z" fill="#e0a106" /><path d="M0 7h10l3-3h15c1.500 0 2 .7 2 2v20c0 1.500-.7 2-2 2H2c-1.300 0-2-.5-2-2z" fill="#fecb3e" /><path d="M5.500 28v-5c0-1.500.7-2.500 2.500-2.500h14c1.800 0 2.500 1 2.500 2.500v5z" fill="#0f6cbd" /><path d="M9 24.500h12" stroke="#0a4a85" strokeWidth="1.500" />
        </TaskApp>
        <TaskApp>
          <circle cx="15" cy="15" r="15" fill="#000" />
          <g fill="none" strokeWidth="2.700"><path d="M16 6v13a4.300 4.300 0 1 1-4.300-4.300M16 6c.5 3.500 2.500 5 5.500 5.200" stroke="#25f4ee" transform="translate(-1 -.8)" /><path d="M16 6v13a4.300 4.300 0 1 1-4.300-4.300M16 6c.5 3.500 2.500 5 5.500 5.200" stroke="#fe2c55" transform="translate(1.200 .8)" /><path d="M16 6v13a4.300 4.300 0 1 1-4.300-4.300M16 6c.5 3.500 2.500 5 5.500 5.200" stroke="#fff" /></g>
        </TaskApp>
        <TaskApp>
          <defs><linearGradient id="st" x1="0" y1="0" x2="1" y2="1"><stop offset="0" stopColor="#0c6fb8" /><stop offset="1" stopColor="#2a3560" /></linearGradient></defs>
          <path d="M8 6V3c0-1 .5-1.500 1.500-1.500h11c1 0 1.500.5 1.500 1.500v3" fill="none" stroke="#2cc5f0" strokeWidth="2" />
          <path d="M.5 5.500h29V25c0 3-1.500 5-4.500 5H5c-3 0-4.500-2-4.500-5z" fill="url(#st)" />
          <path d="M9.500 12h5v5h-5z" fill="#f25022" /><path d="M15.500 12h5v5h-5z" fill="#7fba00" /><path d="M9.500 18h5v5h-5z" fill="#00a4ef" /><path d="M15.500 18h5v5h-5z" fill="#ffb900" />
        </TaskApp>
        <TaskApp>
          <defs><linearGradient id="ma" x1="1" y1="0" x2="0" y2="1"><stop offset="0" stopColor="#0a9bff" /><stop offset=".6" stopColor="#3c4dfb" /><stop offset="1" stopColor="#6a1cfb" /></linearGradient></defs>
          <path d="M0 0h30v30H0z" fill="url(#ma)" /><path d="M4.500 21.500 12 8M11.500 21.500 20 8h2.500v10" fill="none" stroke="#e8ecff" strokeWidth="2.800" /><circle cx="20.500" cy="20.500" r="1.600" fill="#fff" />
        </TaskApp>
        <TaskApp run>
          <defs><linearGradient id="e1" x1="0" y1="0" x2="1" y2=".4"><stop offset="0" stopColor="#1fa4dc" /><stop offset=".6" stopColor="#2cc6b8" /><stop offset="1" stopColor="#72e04c" /></linearGradient><linearGradient id="e2" x1="0" y1="0" x2="0" y2="1"><stop offset="0" stopColor="#1ca0e0" /><stop offset="1" stopColor="#0b5fb5" /></linearGradient></defs>
          <path d="M.2 14C1 6 7 0 15 0c9 0 15 6 15 12.500 0 5-4 8-8 8-3 0-5-1-4-2.500 1-1.800.5-6-4-7.500C8 8.500 2 10.500.2 14z" fill="url(#e1)" />
          <path d="M.1 15C.5 9 6 7 10.500 7.500c5 .7 8.500 3.500 8 8-.3-2-2-3-3.500-3-3 0-5 4-4 8s4.500 7.500 8 8.500C9 32 0 25 .1 15z" fill="url(#e2)" />
          <path d="M11 17c-1 6 4 9.500 9.500 9.500 3 0 5.500-1 7.500-2.500-3 5-9 6.500-13 5.800C8 28 7 20 11 17z" fill="#0c4f9e" />
        </TaskApp>
        <TaskApp><path d="M1.500 0 15 6.500 28.500 0v24L15 30 1.500 24zM7 8.500v12l8 3.800 8-3.800v-12l-8 4z" fill="#c62f2e" fillRule="evenodd" /></TaskApp>
        <TaskApp>
          <path d="M15 2.500a12.500 12.500 0 0 1 0 25" fill="none" stroke="#43b02a" strokeWidth="4.500" /><path d="M15 27.500a12.500 12.500 0 0 1 0-25" fill="none" stroke="#43b02a" strokeWidth="4.500" strokeDasharray="2.200 1" /><path d="M15 27.500a12.500 12.500 0 0 1 0-25" fill="none" stroke="#cbf2f0" strokeWidth=".8" strokeDasharray="2 1.500" />
        </TaskApp>
        <TaskApp>
          <circle cx="15.500" cy="6" r="3.500" fill="#7b83eb" /><circle cx="24" cy="7.500" r="2.700" fill="#5059c9" /><path d="M20 11.500h8V20c0 3-8 3-8 0z" fill="#5059c9" /><path d="M9 11.500h12V22c0 4-9 4-11 0z" fill="#7b83eb" /><rect x="1" y="8" width="15" height="14" rx="1.200" fill="#4b53bc" /><path d="M5 12h7M8.500 12v7.500" stroke="#fff" strokeWidth="1.900" />
          <rect x="8.500" y="21" width="21" height="9" rx="1.500" fill="#1fe0e0" /><text x="10" y="28.500" fontSize="7.800" fontWeight="800" fontFamily="Open Sans" fill="#000" textLength="18">NEW</text>
        </TaskApp>
        <TaskApp run>
          <defs><linearGradient id="ff" x1=".8" y1="0" x2=".3" y2="1"><stop offset="0" stopColor="#fff44f" /><stop offset=".4" stopColor="#ff980e" /><stop offset=".8" stopColor="#ff3647" /><stop offset="1" stopColor="#e31587" /></linearGradient></defs>
          <path d="M3 5c.5 1.500 1.500 2.500 3 3 2-1 4-1 5.500-.5C13.500 5 15.500 2 19 .5c0 3.500 2 5 4 7 .5-1 .5-2 .5-2.500 4.500 3.500 6 9 5 14-1.500 6.500-7 11-13.500 11S2 25.500 1 18c-.5-5 0-9 2-13z" fill="url(#ff)" /><circle cx="14.500" cy="16" r="6" fill="#7a3ee0" /><path d="M5 10c3 0 5 1 8 1.500 1 2-3 2-3.500 4 0 3 3 5 6 4-4 5-11 1-10.500-9.500z" fill="#ffa436" />
        </TaskApp>
        <TaskApp run badge={<Badge $bg="#25808f"><Txt $s={13.5} $c="#fff">3</Txt></Badge>}>
          <path d="M2 28.500 4 21.500C-1.500 12 5 1.700 15 1.700S28.500 8 28.500 15 22 28.500 15 28.500c-2.500 0-4.500-.6-6.500-1.700z" fill="#e4f6f0" stroke="#168a56" strokeWidth="2.500" /><path d="M10 8.500c-3 1.500-1.500 6 2 9.500 3.500 3.500 8.500 5.500 10 2 .3-1.200-1-2-3.500-3l-1.800 2c-2-.8-4-2.800-4.700-4.500l1.500-1.800c-1-2.500-1.500-4.500-3.500-4.200z" fill="#168a56" />
        </TaskApp>
        <TaskApp run badge={<Badge $bg="#f0595b"><Dot /></Badge>}>
          <circle cx="15" cy="15" r="15" fill="#5865f2" /><path d="M8.500 9.500c4-2 9-2 13 0 1.800 3 2.500 6.500 2.300 10-1.300 1-2.600 1.600-4 2l-1.200-2c-2.300.5-4.900.5-7.200 0l-1.200 2c-1.400-.4-2.700-1-4-2-.2-3.500.5-7 2.300-10z" fill="#fff" /><circle cx="11.800" cy="15.500" r="1.800" fill="#5865f2" /><circle cx="18.200" cy="15.500" r="1.800" fill="#5865f2" />
        </TaskApp>
        <TaskApp run>
          <defs><linearGradient id="wx1" x1="0" y1="0" x2="1" y2="1"><stop offset="0" stopColor="#12d6e6" /><stop offset="1" stopColor="#1f55ee" /></linearGradient><linearGradient id="wx2" x1="0" y1="1" x2="1" y2="0"><stop offset="0" stopColor="#1c5cf0" /><stop offset=".65" stopColor="#1f55ee" /><stop offset="1" stopColor="#5ad64a" /></linearGradient></defs>
          <rect width="30" height="30" rx="5" fill="#1b1b1b" />
          <path d="M4.800 10c1.500-1.500 3-.5 3.500 2 .7 4 1.500 8.500 4.200 8.500s4-4.500 4.700-7" fill="none" stroke="url(#wx1)" strokeWidth="4.200" strokeLinecap="round" />
          <path d="M12 9.500c3.500 2 3 11 6.500 11s5-4 5.800-8.500c.4-2.500-3-3-5-1" fill="none" stroke="url(#wx2)" strokeWidth="4.200" strokeLinecap="round" />
        </TaskApp>
        <TaskApp run>
          <path d="m12 1 1.500 2.500h3L18 1h2.500l4.500 2.500-.5 4 1.500 2.500 3.500.5v9l-3.500.5-1.500 2.500.5 4-4.500 2.500H18l-1.500-2.500h-3L12 29.500H9.500L5 27l.5-4L4 20.500.5 20v-9l3.500-.5L5.500 8 5 4 9.500 1z" fill="#808890" /><circle cx="15" cy="15" r="7.500" fill="#f2f5f7" /><circle cx="15" cy="15" r="5.500" fill="#0a62b8" />
        </TaskApp>
        <TaskApp run>
          <rect x="1" y="1" width="28" height="27" rx="4.500" fill="#b30b00" /><path d="M14.500 6.500c2 0 .5 6-2 10.500C10 21.500 7.500 23 7 21.500c-.5-2 7-4.500 12-4.500 4 0 4.500 2.500 2.500 2.700-3 .2-8.500-6-8.500-11 0-1.500.8-2.200 1.500-2.200z" fill="none" stroke="#fff" strokeWidth="1.700" />
        </TaskApp>
        <TaskApp run badge={<Badge $bg="#8a8a8a"><Txt $s={13.5} $c="#fff">1</Txt></Badge>}>
          <defs><linearGradient id="tg" x1="0" y1="0" x2="0" y2="1"><stop offset="0" stopColor="#2fa8dc" /><stop offset="1" stopColor="#1583c4" /></linearGradient></defs>
          <circle cx="15" cy="15" r="14" fill="url(#tg)" /><path d="m5.500 15 16-6.500L19 22.500l-4.500-3.300-2.300 2.300-.7-4.500z" fill="#fff" /><path d="m11.500 17 7-5.500-5 6.700-1.300 3.300z" fill="#c3dff0" />
        </TaskApp>
        <TaskApp on>
          <g transform="translate(.2 .5) scale(.92)"><WordShape /></g>
        </TaskApp>

        <Ic w={14} h={8} ml={82.5}><path d="m1 7.200 6-6 6 6" stroke="#1b1b1b" strokeWidth="1.700" /></Ic>
        <Ic w={20} h={14} ml={24}><path d="M4.500 13.500C-1 13-1 6.500 3.500 5.500 5-.5 12-1 14.500 4c3 0 5.500 2 5.500 5 0 2.500-1.500 4.500-4 4.500z" fill="#0f64b8" stroke="none" /><path d="m3 12.800 9-5.300 7.500 4c-.8 1.300-2 2-3.500 2H4.500z" fill="#28a8ea" stroke="none" /></Ic>
        <Slot $w={75}><Txt $s={14.6} $ml={27.5} $ls={-0.4}>ITA</Txt></Slot>
        <Ic w={20} h={15}><path d="M.8 5.500C6 0 14 0 19.200 5.500M3.500 8.500c3.700-4 9.300-4 13 0M6.300 11.300c2-2.300 5.400-2.300 7.400 0" stroke="#1b1b1b" strokeWidth="1.500" /><circle cx="10" cy="13" r="1.700" fill="#1b1b1b" stroke="none" /></Ic>
        <Ic w={20} h={16} ml={10}><path d="M.8 5.500h3.500L8.500 1.500v13l-4.200-4H.8z" stroke="#1b1b1b" strokeWidth="1.400" /><path d="M11 5c1.500 1.700 1.500 4.300 0 6M13.500 2.700c3 3 3 7.600 0 10.600" stroke="#1b1b1b" strokeWidth="1.400" /><path d="M16 .8c4 4.300 4 10 0 14.400" stroke="#8fb5b5" strokeWidth="1.200" /></Ic>
        <Ic w={20} h={16} ml={10}><path d="M7 3.500h8.500c1 0 1.500.7 1.500 1.500v7.500c0 1-.5 1.500-1.500 1.500H3c-1 0-1.500-.5-1.500-1.500V10" stroke="#1b1b1b" strokeWidth="1.500" /><path d="M18 7h2v4h-2zM7.500 5.500h5V12H3.800V9z" fill="#1b1b1b" stroke="none" /><path d="M4.500 0 0 6h3L1.500 10.500 7 4.500H4L6 0z" fill="#1b1b1b" stroke="none" /></Ic>
        <Clock><Txt $s={14.2} $c="#1b1b1b" $ls={-0.2}>16:36</Txt><Txt $s={14.3} $c="#1b1b1b" $ls={0.05}>09/04/2024</Txt></Clock>
        <Ic w={16} h={20} ml={12}><path d="M8 0c4 0 6 2.800 6 6v5l2 4v1H0v-1l2-4V6c0-3.200 2-6 6-6zM5.500 17.500h5c-.3 2.500-4.700 2.500-5 0z" fill="#0f4c5c" stroke="none" /></Ic>
      </TaskBar>

      <Bubble>
        <Ring><Txt $s={15.5} $w={700} $c="#1c2140">14</Txt></Ring>
        <Grip />
      </Bubble>
    </Screen>
  );
}
